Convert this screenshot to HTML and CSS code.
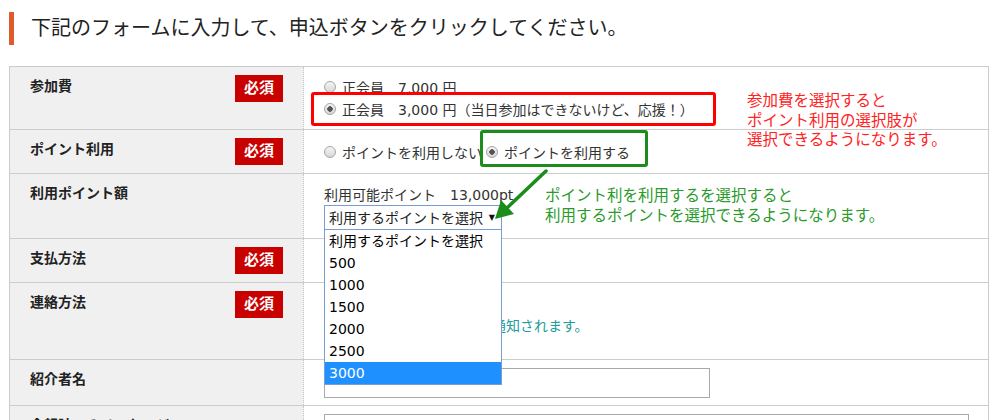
FILE: index.html
```html
<!DOCTYPE html>
<html lang="ja">
<head>
<meta charset="UTF-8">
    <title>申込フォーム</title>
    <link rel="stylesheet" href="styles.css">
</head>
<body>
    <h2 class="lead">下記のフォームに入力して、申込ボタンをクリックしてください。</h2>

    <div class="form">
        <div class="row r1">
            <div class="label"><span class="label-text">参加費</span><span class="req">必須</span></div>
            <div class="value">
                <div class="option"><span class="radio"></span>正会員　7,000 円</div>
                <div class="option boxed-red"><span class="radio on"></span>正会員　3,000 円（当日参加はできないけど、応援！）</div>
                <p class="note-red">参加費を選択すると<br>ポイント利用の選択肢が<br>選択できるようになります。</p>
            </div>
        </div>

        <div class="row r2">
            <div class="label"><span class="label-text">ポイント利用</span><span class="req">必須</span></div>
            <div class="value">
                <div class="choices">
                    <div class="option"><span class="radio"></span>ポイントを利用しない</div>
                    <div class="option boxed-green"><span class="radio on"></span>ポイントを利用する</div>
                </div>
            </div>
        </div>

        <div class="row r3">
            <div class="label"><span class="label-text">利用ポイント額</span></div>
            <div class="value">
                <div class="option">利用可能ポイント　13,000pt</div>
                <div class="select-wrap">
                    <div class="select"><span>利用するポイントを選択</span><span class="caret">▼</span></div>
                    <ul class="list">
                        <li>利用するポイントを選択</li>
                        <li>500</li>
                        <li>1000</li>
                        <li>1500</li>
                        <li>2000</li>
                        <li>2500</li>
                        <li class="sel">3000</li>
                    </ul>
                </div>
                <svg class="arrow" width="60" height="56" viewBox="0 0 60 56">
                    <line x1="56" y1="3" x2="18" y2="39" stroke="#1c8c1c" stroke-width="3.5" stroke-linecap="round"/>
                    <polygon points="5,51 24,46 11,32" fill="#1c8c1c"/>
                </svg>
                <p class="note-green">ポイント利を利用するを選択すると<br>利用するポイントを選択できるようになります。</p>
            </div>
        </div>

        <div class="row r4">
            <div class="label"><span class="label-text">支払方法</span><span class="req">必須</span></div>
            <div class="value"></div>
        </div>

        <div class="row r5">
            <div class="label"><span class="label-text">連絡方法</span><span class="req">必須</span></div>
            <div class="value top">
                <div class="option note-teal">ご登録のメールアドレスに通知されます。</div>
            </div>
        </div>

        <div class="row r6">
            <div class="label"><span class="label-text">紹介者名</span></div>
            <div class="value">
                <input class="text" type="text">
            </div>
        </div>

        <div class="row r7">
            <div class="label"><span class="label-text">会報誌へのメッセージ</span></div>
            <div class="value top">
                <input class="text wide" type="text">
            </div>
        </div>
    </div>
</body>
</html>
```

FILE: styles.css
```css
body { margin: 0; font-family: "DejaVu Sans", "Noto Sans CJK JP", sans-serif; color: #333; background: #fff; }

.lead { margin: 12px 0 21px 9px; height: 33px; line-height: 33px; padding-left: 17px; border-left: 5px solid #df5b2b; font-size: 20px; font-weight: normal; color: #222; }

.form { margin-left: 9px; width: 980px; box-sizing: border-box; border: 1px solid #ccc; border-bottom: 0; }
.row { display: grid; grid-template-columns: 294px 1fr; border-bottom: 1px solid #ccc; }
.r1 { height: 62px; }
.r2 { height: 43px; }
.r3 { height: 64px; }
.r4 { height: 43px; }
.r5 { height: 76px; }
.r6 { height: 45px; }
.r7 { height: 50px; }

.label { display: flex; justify-content: space-between; align-items: flex-start; padding: 8px 20px 0 20px; background: #f0f0f0; border-right: 1px dotted #c8c8c8; font-size: 14px; font-weight: bold; color: #222; }
.label-text { margin-top: 1px; line-height: 20px; white-space: nowrap; }
.req { width: 48px; height: 27px; line-height: 27px; text-align: center; background: #c80000; color: #fff; font-size: 15px; }

.value { position: relative; display: flex; flex-direction: column; justify-content: center; padding: 0 20px; font-size: 14px; }
.value.top { justify-content: flex-start; padding-top: 9px; }
.r5 .value.top { padding-top: 31px; }
.r7 .value.top { padding-top: 8px; }

.option { display: flex; align-items: center; height: 22px; white-space: nowrap; }
.choices { display: flex; align-items: center; }
.radio { width: 12px; height: 12px; margin-right: 6px; box-sizing: border-box; border: 1px solid #a5a5a5; border-radius: 50%; background: linear-gradient(#f6f6f6, #d6d6d6); flex-shrink: 0; }
.radio.on { background: radial-gradient(circle, #555 0 2.5px, transparent 3px), linear-gradient(#f6f6f6, #d6d6d6); }

.boxed-red { align-self: flex-start; margin: -6px 0 -6px -13px; padding: 3px 19px 3px 10px; border: 3px solid #f00; border-radius: 3px; }
.boxed-green { margin: -11px 0 -4px -2px; padding: 8px 15px 1px 3px; border: 3px solid #1c8c1c; border-radius: 3px; }

.note-red { position: absolute; left: 443px; top: 25px; margin: 0; font-size: 15.5px; line-height: 19.5px; color: #f22; white-space: nowrap; }
.note-green { position: absolute; left: 241px; top: 13px; margin: 0; font-size: 15.5px; line-height: 19.5px; color: #2a9a2a; white-space: nowrap; }
.note-teal { color: #1c9c9c; }
.arrow { position: absolute; left: 186px; top: -6px; }

.select-wrap { position: relative; width: 178px; }
.select { display: flex; justify-content: space-between; align-items: center; height: 25px; box-sizing: border-box; padding: 0 6px 0 4px; border: 1px solid #7a9cd3; color: #222; white-space: nowrap; }
.caret { font-size: 8px; color: #111; }
.list { position: absolute; top: 100%; left: 0; z-index: 3; width: 178px; box-sizing: border-box; margin: 0; padding: 0; list-style: none; background: #fff; border: 1px solid #7a9cd3; border-top: 0; color: #000; }
.list li { height: 22px; line-height: 22px; padding-left: 4px; }
.list li.sel { background: #1e90ff; color: #fff; }

.text { width: 386px; height: 30px; box-sizing: border-box; margin: 0; border: 1px solid #aaa; }
.text.wide { width: 645px; }
```
